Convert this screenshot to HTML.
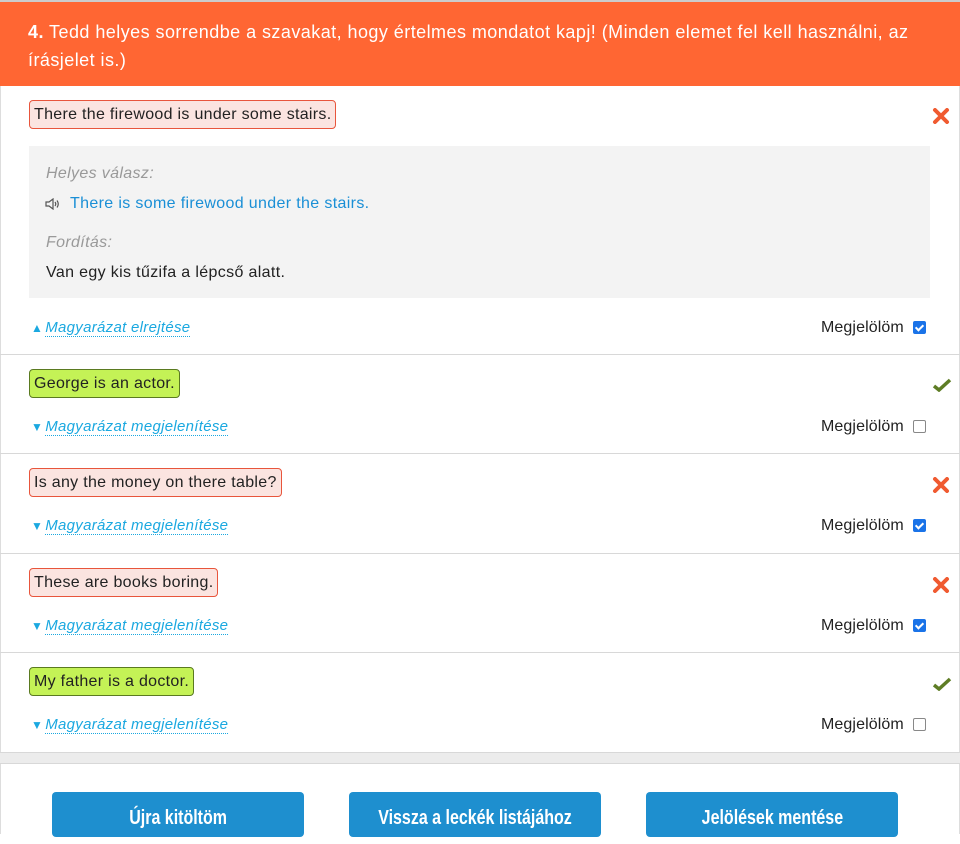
<!DOCTYPE html>
<html><head><meta charset="utf-8"><style>
*{margin:0;padding:0;box-sizing:border-box}
body{width:960px;height:830px;overflow:hidden;background:#fff;font-family:"Liberation Sans",sans-serif;position:relative;color:#222}
.hdr{position:absolute;left:0;top:0;width:960px;height:86px;background:#ff6633;border-top:2px solid #ccc;color:#fff;font-size:18px;letter-spacing:0.45px;line-height:28px;padding:16px 28px 0 28px}
.box{position:absolute;left:0;top:86px;width:960px;height:667px;border:1px solid #ddd;border-top:none}
.sep{position:absolute;left:0;width:960px;height:1px;background:#d8d8d8}
.ans{position:absolute;left:29px;height:29px;font-size:16px;letter-spacing:0.3px;line-height:27px;padding:0 4px;border-radius:4px;white-space:nowrap}
.bad{background:#fbe4e0;border:1px solid #e8553c}
.good{background:#c4f256;border:1px solid #5a7a20}
.ic{position:absolute;left:932px}
.lnk{position:absolute;left:31px;font-size:15px;letter-spacing:0.3px;font-style:italic;color:#1aa8e0;line-height:18px}
.lnk span{border-bottom:1px dotted #1aa8e0}
.lnk b{font-style:normal;font-size:12px;font-weight:normal;margin-right:2px}
.mj{position:absolute;left:821px;font-size:16px;letter-spacing:0.1px;line-height:18px;color:#222}
.cb{position:absolute;left:92px;top:2px;width:13px;height:13px;border:1.5px solid #888;border-radius:2px}
.cb.on{background:#1a73e8;border-color:#1a73e8}
.cb.on:after{content:"";position:absolute;left:3px;top:0.5px;width:3px;height:6px;border:solid #fff;border-width:0 2px 2px 0;transform:rotate(45deg)}
.gray{position:absolute;left:29px;top:146px;width:901px;height:152px;background:#f3f3f3;font-size:16px;letter-spacing:0.35px}
.btn{position:absolute;top:792px;width:252px;height:45px;background:#1e8fcf;border-radius:4px;color:#fff;font-weight:bold;font-size:20px;text-align:center;line-height:52px;white-space:nowrap}
.btn span{display:inline-block;transform:scaleX(0.8)}
</style></head><body>
<div class="hdr"><b>4.</b> Tedd helyes sorrendbe a szavakat, hogy értelmes mondatot kapj! (Minden elemet fel kell használni, az írásjelet is.)</div>
<div class="box"></div>

<div class="ans bad" style="top:100px">There the firewood is under some stairs.</div>
<svg class="ic" style="top:108px" width="18" height="16" viewBox="0 0 18 16"><path d="M3 2L15 14M15 2L3 14" stroke="#f05a30" stroke-width="4" stroke-linecap="round"/></svg>
<div class="gray">
 <div style="position:absolute;left:17px;top:19px;font-style:italic;color:#999">Helyes válasz:</div>
 <svg style="position:absolute;left:16px;top:52px" width="16" height="12" viewBox="0 0 16 12"><path d="M1 4h3l4-3v10l-4-3H1z" fill="none" stroke="#555" stroke-width="1.2"/><path d="M10 4q1.5 2 0 4M12 2.5q2.5 3.5 0 7" fill="none" stroke="#555" stroke-width="1.2"/></svg>
 <div style="position:absolute;left:41px;top:49px;color:#1a8fd6">There is some firewood under the stairs.</div>
 <div style="position:absolute;left:17px;top:88px;font-style:italic;color:#999">Fordítás:</div>
 <div style="position:absolute;left:17px;top:118px;color:#222">Van egy kis tűzifa a lépcső alatt.</div>
</div>
<div class="lnk" style="top:319px"><b>▲</b><span>Magyarázat elrejtése</span></div>
<div class="mj" style="top:319px">Megjelölöm<i class="cb on"></i></div>
<div class="sep" style="top:354px"></div>

<div class="ans good" style="top:369px">George is an actor.</div>
<svg class="ic" style="top:378px" width="20" height="14" viewBox="0 0 20 14"><path d="M2 8l5 4L18 2" fill="none" stroke="#5e7d25" stroke-width="3.5"/></svg>
<div class="lnk" style="top:418px"><b>▼</b><span>Magyarázat megjelenítése</span></div>
<div class="mj" style="top:418px">Megjelölöm<i class="cb"></i></div>
<div class="sep" style="top:453px"></div>

<div class="ans bad" style="top:468px">Is any the money on there table?</div>
<svg class="ic" style="top:477px" width="18" height="16" viewBox="0 0 18 16"><path d="M3 2L15 14M15 2L3 14" stroke="#f05a30" stroke-width="4" stroke-linecap="round"/></svg>
<div class="lnk" style="top:517px"><b>▼</b><span>Magyarázat megjelenítése</span></div>
<div class="mj" style="top:517px">Megjelölöm<i class="cb on"></i></div>
<div class="sep" style="top:553px"></div>

<div class="ans bad" style="top:568px">These are books boring.</div>
<svg class="ic" style="top:577px" width="18" height="16" viewBox="0 0 18 16"><path d="M3 2L15 14M15 2L3 14" stroke="#f05a30" stroke-width="4" stroke-linecap="round"/></svg>
<div class="lnk" style="top:617px"><b>▼</b><span>Magyarázat megjelenítése</span></div>
<div class="mj" style="top:617px">Megjelölöm<i class="cb on"></i></div>
<div class="sep" style="top:652px"></div>

<div class="ans good" style="top:667px">My father is a doctor.</div>
<svg class="ic" style="top:677px" width="20" height="14" viewBox="0 0 20 14"><path d="M2 8l5 4L18 2" fill="none" stroke="#5e7d25" stroke-width="3.5"/></svg>
<div class="lnk" style="top:716px"><b>▼</b><span>Magyarázat megjelenítése</span></div>
<div class="mj" style="top:716px">Megjelölöm<i class="cb"></i></div>

<div style="position:absolute;left:0;top:752px;width:960px;height:12px;background:#ececec;border-top:1px solid #d8d8d8;border-bottom:1px solid #d8d8d8"></div>
<div style="position:absolute;left:0;top:764px;width:960px;height:70px;border-left:1px solid #ddd;border-right:1px solid #ddd"></div>
<div class="btn" style="left:52px"><span>Újra kitöltöm</span></div>
<div class="btn" style="left:349px"><span>Vissza a leckék listájához</span></div>
<div class="btn" style="left:646px"><span>Jelölések mentése</span></div>
</body></html>
